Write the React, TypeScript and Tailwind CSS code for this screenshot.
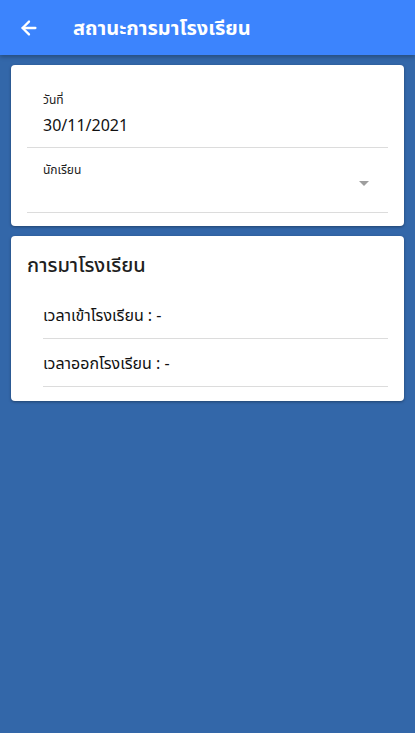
import { ArrowLeft } from "lucide-react";

const font = { fontFamily: '"Noto Sans", "Noto Sans Thai", sans-serif' };

export default function App() {
  return (
    <div className="min-h-[733px] w-full bg-[#3367a9] flex flex-col" style={font}>
      {/* Toolbar */}
      <div className="h-[55px] bg-[#3c84fd] flex items-center shadow-[0_2px_4px_rgba(0,0,0,0.25)] shrink-0">
        <div className="w-[56px] flex justify-center pl-[1px]">
          <ArrowLeft size={22} strokeWidth={2.5} className="text-white" />
        </div>
        <h1 className="ml-[17px] text-white text-[20px] font-bold leading-none">สถานะการมาโรงเรียน</h1>
      </div>

      <div className="px-[11px] pt-[10px] flex flex-col gap-[10px]">
        {/* Filter card */}
        <div className="bg-white rounded-[4px] shadow-[0_1px_3px_rgba(0,0,0,0.35)] px-4 pt-[27px]">
          <div className="border-b border-[#dcdcdc] pb-[10px] pl-4">
            <p className="text-[12px] leading-[16px] text-[#222]">วันที่</p>
            <p className="text-[16px] leading-[24px] text-[#111] mt-[5px]">30/11/2021</p>
          </div>
          <div className="border-b border-[#dcdcdc] pl-4 pt-[14px] h-[65px] flex items-start">
            <p className="text-[12px] leading-[16px] text-[#222] flex-1">นักเรียน</p>
            <div className="mt-[19px] mr-[19px] w-0 h-0 border-l-[5px] border-r-[5px] border-t-[5px] border-l-transparent border-r-transparent border-t-[#9e9e9e]" />
          </div>
          <div className="h-[13px]" />
        </div>

        {/* Attendance card */}
        <div className="bg-white rounded-[4px] shadow-[0_1px_3px_rgba(0,0,0,0.35)] px-4 pt-[15px] pb-[14px]">
          <h2 className="text-[20px] leading-[28px] font-medium text-[#1f1f1f]">การมาโรงเรียน</h2>
          <div className="pl-4 mt-[12px]">
            <div className="border-b border-[#dcdcdc] h-[48px] pt-[1px] flex items-center">
              <p className="text-[16px] text-[#111]">เวลาเข้าโรงเรียน : -</p>
            </div>
            <div className="border-b border-[#dcdcdc] h-[48px] pt-[1px] flex items-center">
              <p className="text-[16px] text-[#111]">เวลาออกโรงเรียน : -</p>
            </div>
          </div>
        </div>
      </div>
    </div>
  );
}
